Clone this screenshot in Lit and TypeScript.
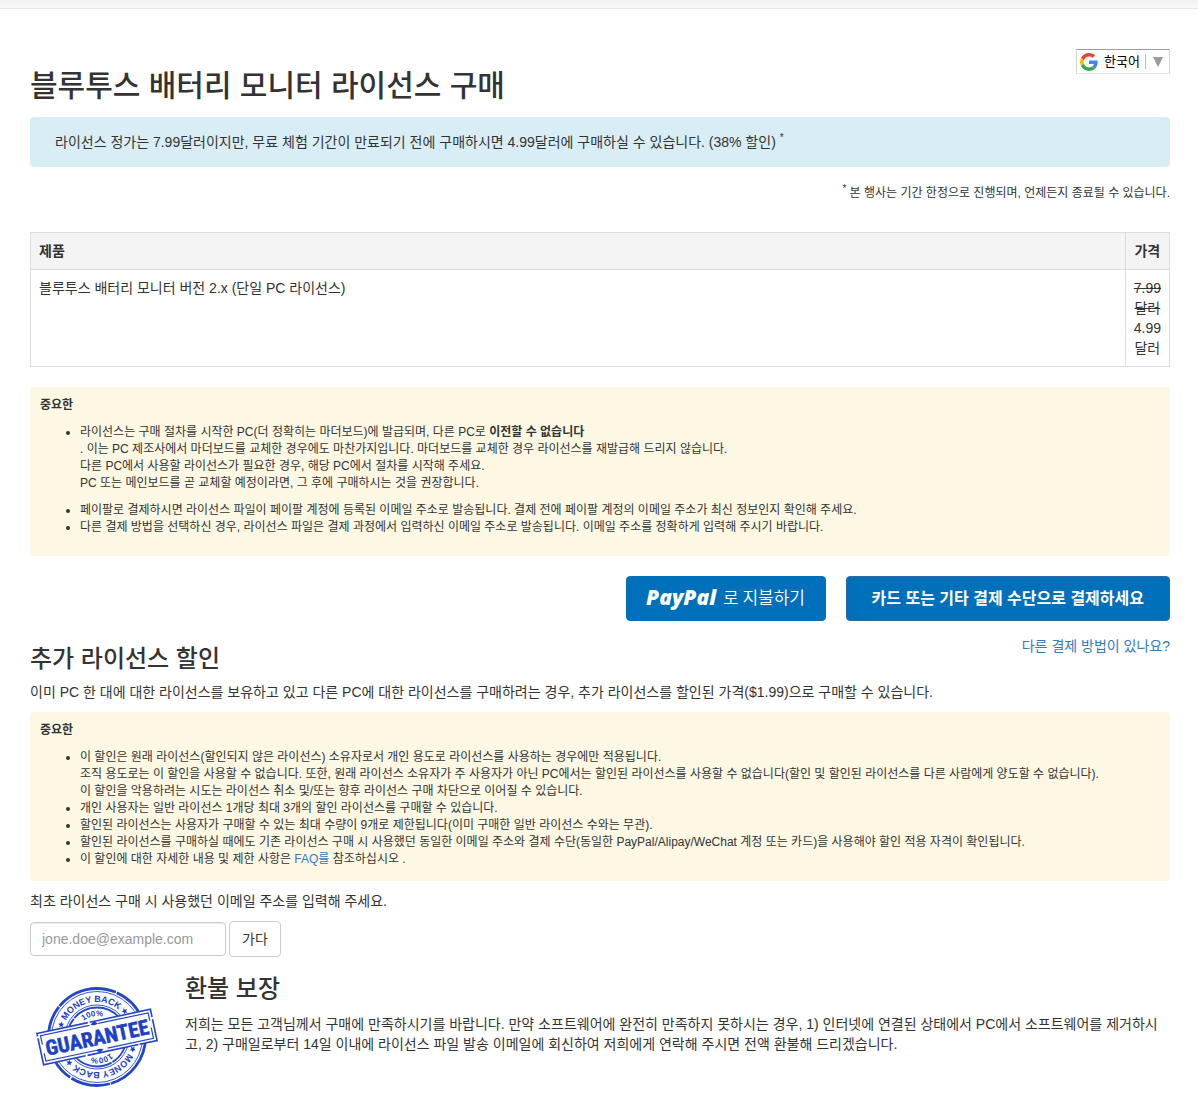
import { LitElement, html, css, svg } from "lit";
import { customElement, property, state } from "lit/decorators.js";

const shared = css`
  *,
  *::before,
  *::after {
    box-sizing: border-box;
  }
  a {
    color: #337ab7;
    text-decoration: none;
  }
  a:hover {
    text-decoration: underline;
  }
`;

/** Language picker shown at the top right of the page. */
@customElement("language-picker")
class LanguagePicker extends LitElement {
  @property() language = "한국어";

  static styles = [
    shared,
    css`
      :host {
        display: block;
        flex: none;
      }
      .picker {
        display: flex;
        align-items: center;
        height: 25px;
        padding: 0 6px 0 3px;
        background: #fff;
        border: 1px solid #d5d5d5;
        border-top-color: #9b9b9b;
        border-bottom-color: #e8e8e8;
        border-radius: 0;
        font: 13px/20px "Liberation Sans", "Noto Sans CJK KR", sans-serif;
        color: #000;
        cursor: pointer;
      }
      .logo {
        width: 18px;
        height: 18px;
        margin-right: 6px;
      }
      .arrow {
        width: 18px;
        height: 15px;
        margin-left: 5px;
        padding-left: 7px;
        border-left: 1px solid #bbb;
      }
      .arrow svg {
        display: block;
        width: 10px;
        height: 15px;
      }
    `,
  ];

  render() {
    return html`
      <button class="picker" type="button">
        <svg class="logo" viewBox="0 0 48 48" aria-hidden="true">
          <path fill="#EA4335" d="M24 9.5c3.54 0 6.71 1.22 9.21 3.6l6.85-6.85C35.9 2.38 30.47 0 24 0 14.62 0 6.51 5.38 2.56 13.22l7.98 6.19C12.43 13.72 17.74 9.5 24 9.5z" />
          <path fill="#4285F4" d="M46.98 24.55c0-1.57-.15-3.09-.38-4.55H24v9.02h12.94c-.58 2.96-2.26 5.48-4.78 7.18l7.73 6c4.51-4.18 7.09-10.36 7.09-17.65z" />
          <path fill="#FBBC05" d="M10.53 28.59c-.48-1.45-.76-2.99-.76-4.59s.27-3.14.76-4.59l-7.98-6.19C.92 16.46 0 20.12 0 24c0 3.88.92 7.54 2.56 10.78l7.97-6.19z" />
          <path fill="#34A853" d="M24 48c6.48 0 11.93-2.13 15.89-5.81l-7.73-6c-2.15 1.45-4.92 2.3-8.16 2.3-6.26 0-11.57-4.22-13.47-9.91l-7.98 6.19C6.51 42.62 14.62 48 24 48z" />
        </svg>
        <span>${this.language}</span>
        <span class="arrow">
          <svg viewBox="0 0 10 15" aria-hidden="true"><path fill="#9b9b9b" d="M0 3h10L5 13z" /></svg>
        </span>
      </button>
    `;
  }
}

/** Round money-back stamp with a tilted banner. */
@customElement("guarantee-stamp")
class GuaranteeStamp extends LitElement {
  static styles = css`
    :host {
      display: block;
      flex: none;
    }
    .stamp {
      display: block;
      width: 135px;
      height: 120px;
      fill: none;
      stroke: #2345c8;
    }
    .word {
      fill: #1d40c6;
      stroke: none;
      font-family: "Liberation Sans", sans-serif;
      font-weight: 700;
      text-anchor: middle;
    }
    .ring {
      font-size: 9px;
    }
    .percent {
      font-size: 8px;
    }
    .title {
      font-family: "Roboto Condensed", "Open Sans Condensed", "Roboto", sans-serif;
      font-size: 21px;
      stroke: #1d40c6;
      stroke-width: 0.5;
    }
    .paper {
      fill: #fefefe;
    }
    .solid {
      fill: #1d40c6;
      stroke: none;
    }
  `;

  private half() {
    const star = "M0 -3l.9 2 2.100.2-1.600 1.400.5 2.100-1.900-1.100-1.900 1.100.5-2.100-1.600-1.400 2.100-.2z";
    return svg`
      <text class="word ring"><textPath href="#outer" startOffset="50%">MONEY BACK</textPath></text>
      <text class="word percent"><textPath href="#inner" startOffset="50%">100%</textPath></text>
      <path class="solid" d=${star} transform="rotate(-59) translate(0 -38)" />
      <path class="solid" d=${star} transform="rotate(59) translate(0 -38)" />
    `;
  }

  render() {
    return html`
      <svg class="stamp" viewBox="0 0 135 120" role="img" aria-label="Money back guarantee">
        <defs>
          <path id="outer" d="M-35 0A35 35 0 0 1 35 0" />
          <path id="inner" d="M-21 0A21 21 0 0 1 21 0" />
        </defs>
        <g transform="translate(67 61)">
          <circle r="48.500" stroke-width="2.800" stroke-dasharray="62 1 40 1.500 80 1" />
          <circle r="45.500" stroke-width="0.900" />
          <circle r="32" stroke-width="0.900" />
          <circle r="29.500" stroke-width="1.800" stroke-dasharray="30 1 50 1" />
          <g transform="rotate(-12)">${this.half()}</g>
          <g transform="rotate(168)">${this.half()}</g>
          <g transform="rotate(-12)">
            <rect class="paper" x="-58" y="-16" width="116" height="32" stroke-width="1.600" stroke-dasharray="52 2 70 2 40 1" />
            <path d="M-55 -4V-13H-5M4 -13H55V-5M55 2V13H8M1 13H-55V5" stroke-width="1.200" />
            <path class="solid" d="M-4 -13l4-3 4 3-4 1zM-4 13l4 3 4-3-4-1z" />
            <text class="word title" y="8">GUARANTEE</text>
          </g>
        </g>
      </svg>
    `;
  }
}

/** Yellow box that lists the terms of a purchase. */
@customElement("important-note")
class ImportantNote extends LitElement {
  @property() heading = "중요한";

  static styles = [
    shared,
    css`
      :host {
        display: block;
        padding: 10px;
        background: #fcf8e3;
        border-radius: 4px;
        font-size: 12px;
        line-height: 17px;
      }
      .heading {
        display: block;
        margin-bottom: 10px;
      }
    `,
  ];

  render() {
    return html`<strong class="heading">${this.heading}</strong><slot></slot>`;
  }
}

@customElement("app-root")
class AppRoot extends LitElement {
  @state() private email = "";

  static styles = [
    shared,
    css`
      :host {
        display: block;
        font-family: "Liberation Sans", "Noto Sans CJK KR", sans-serif;
        font-size: 14px;
        line-height: 20px;
        color: #333;
        background: #fff;
      }
      h1,
      h2,
      p,
      ul {
        margin: 0;
      }
      h1,
      h2 {
        font-weight: 500;
      }
      h1 {
        padding-top: 20px;
        font-size: 30px;
        line-height: 33px;
      }
      h2 {
        font-size: 24px;
        line-height: 26px;
      }
      .topbar {
        height: 9px;
        background: linear-gradient(#f1f1f1, #f8f8f8);
        border-bottom: 1px solid #e7e7e7;
      }
      .page {
        padding: 40px 28px 10px 30px;
      }
      .header {
        display: flex;
        justify-content: space-between;
        align-items: flex-start;
        margin-bottom: 15px;
      }
      .offer {
        padding: 15px 25px;
        background: #d9edf7;
        border-radius: 4px;
      }
      sup {
        font-size: 10px;
        line-height: 0;
      }
      .terms {
        margin: 16px 0 29px;
        font-size: 12px;
        text-align: right;
      }
      .products {
        width: 100%;
        margin-bottom: 20px;
        border-collapse: collapse;
      }
      .products th,
      .products td {
        padding: 8px;
        border: 1px solid #ddd;
        text-align: left;
        vertical-align: top;
      }
      .products th {
        background: #f4f4f4;
      }
      .products .price {
        width: 1%;
        text-align: center;
        word-break: keep-all;
      }
      .list {
        padding-left: 40px;
      }
      .list.purchase {
        padding-bottom: 10px;
      }
      .list.discount {
        padding-bottom: 3px;
      }
      .list .spaced {
        margin-bottom: 10px;
      }
      .pay {
        display: flex;
        flex-wrap: wrap;
        justify-content: flex-end;
        gap: 20px;
        margin-top: 20px;
      }
      .pay-button {
        display: flex;
        align-items: center;
        justify-content: center;
        height: 45px;
        padding: 0 25px 3px;
        border: 1px solid #0070ba;
        border-radius: 4px;
        background: #0070ba;
        color: #fff;
        font-family: inherit;
        font-size: 16px;
        cursor: pointer;
      }
      .paypal {
        min-width: 200px;
        gap: 7px;
        padding: 0 16px 3px;
        font-family: "Noto Sans CJK KR", sans-serif;
        font-size: 17px;
        font-weight: 350;
        line-height: 24px;
      }
      .paypal-logo {
        font-family: "Open Sans", sans-serif;
        font-size: 21px;
        font-style: italic;
        font-weight: 800;
      }
      .card {
        border-color: #2e6da4;
        font-weight: 700;
      }
      .split {
        display: flex;
        justify-content: space-between;
        align-items: flex-start;
        padding-top: 15px;
      }
      .split h2 {
        padding-top: 10px;
      }
      .intro {
        padding: 10px 0;
      }
      .lookup {
        margin: 10px 0 19px;
      }
      .lookup-row {
        display: flex;
        align-items: center;
        gap: 3px;
        margin-top: 10px;
      }
      .email {
        width: 196px;
        height: 34px;
        padding: 0 11px;
        border: 1px solid #ccc;
        border-radius: 4px;
        box-shadow: inset 0 1px 1px rgba(0, 0, 0, 0.075);
        color: #555;
        font: inherit;
      }
      .email::placeholder {
        color: #999;
        opacity: 1;
      }
      .go {
        height: 36px;
        padding: 0 12px;
        border: 1px solid #ccc;
        border-radius: 4px;
        background: #fff;
        color: #333;
        font: inherit;
        cursor: pointer;
      }
      .guarantee {
        display: flex;
        align-items: flex-start;
        gap: 20px;
      }
      .guarantee h2 {
        margin-bottom: 12px;
      }
    `,
  ];

  private onEmail(event: Event) {
    this.email = (event.target as HTMLInputElement).value;
  }

  render() {
    return html`
      <div class="topbar"></div>
      <main class="page">
        <header class="header">
          <h1>블루투스 배터리 모니터 라이선스 구매</h1>
          <language-picker></language-picker>
        </header>

        <p class="offer">
          라이선스 정가는 7.99달러이지만, 무료 체험 기간이 만료되기 전에 구매하시면 4.99달러에 구매하실 수 있습니다. (38% 할인) <sup>*</sup>
        </p>
        <p class="terms"><sup>*</sup> 본 행사는 기간 한정으로 진행되며, 언제든지 종료될 수 있습니다.</p>

        <table class="products">
          <thead>
            <tr>
              <th scope="col">제품</th>
              <th class="price" scope="col">가격</th>
            </tr>
          </thead>
          <tbody>
            <tr>
              <td>블루투스 배터리 모니터 버전 2.x (단일 PC 라이선스)</td>
              <td class="price"><del>7.99 달러</del> 4.99 달러</td>
            </tr>
          </tbody>
        </table>

        <important-note>
          <ul class="list purchase">
            <li class="spaced">
              라이선스는 구매 절차를 시작한 PC(더 정확히는 마더보드)에 발급되며, 다른 PC로 <strong>이전할 수 없습니다</strong><br />
              . 이는 PC 제조사에서 마더보드를 교체한 경우에도 마찬가지입니다. 마더보드를 교체한 경우 라이선스를 재발급해 드리지 않습니다.<br />
              다른 PC에서 사용할 라이선스가 필요한 경우, 해당 PC에서 절차를 시작해 주세요.<br />
              PC 또는 메인보드를 곧 교체할 예정이라면, 그 후에 구매하시는 것을 권장합니다.
            </li>
            <li>페이팔로 결제하시면 라이선스 파일이 페이팔 계정에 등록된 이메일 주소로 발송됩니다. 결제 전에 페이팔 계정의 이메일 주소가 최신 정보인지 확인해 주세요.</li>
            <li>다른 결제 방법을 선택하신 경우, 라이선스 파일은 결제 과정에서 입력하신 이메일 주소로 발송됩니다. 이메일 주소를 정확하게 입력해 주시기 바랍니다.</li>
          </ul>
        </important-note>

        <div class="pay">
          <button class="pay-button paypal" type="button"><span class="paypal-logo">PayPal</span><span>로 지불하기</span></button>
          <button class="pay-button card" type="button">카드 또는 기타 결제 수단으로 결제하세요</button>
        </div>

        <section>
          <div class="split">
            <h2>추가 라이선스 할인</h2>
            <a href="#payment-methods">다른 결제 방법이 있나요?</a>
          </div>
          <p class="intro">이미 PC 한 대에 대한 라이선스를 보유하고 있고 다른 PC에 대한 라이선스를 구매하려는 경우, 추가 라이선스를 할인된 가격($1.99)으로 구매할 수 있습니다.</p>
          <important-note>
            <ul class="list discount">
              <li>
                이 할인은 원래 라이선스(할인되지 않은 라이선스) 소유자로서 개인 용도로 라이선스를 사용하는 경우에만 적용됩니다.<br />
                조직 용도로는 이 할인을 사용할 수 없습니다. 또한, 원래 라이선스 소유자가 주 사용자가 아닌 PC에서는 할인된 라이선스를 사용할 수 없습니다(할인 및 할인된 라이선스를 다른 사람에게 양도할 수 없습니다).<br />
                이 할인을 악용하려는 시도는 라이선스 취소 및/또는 향후 라이선스 구매 차단으로 이어질 수 있습니다.
              </li>
              <li>개인 사용자는 일반 라이선스 1개당 최대 3개의 할인 라이선스를 구매할 수 있습니다.</li>
              <li>할인된 라이선스는 사용자가 구매할 수 있는 최대 수량이 9개로 제한됩니다(이미 구매한 일반 라이선스 수와는 무관).</li>
              <li>할인된 라이선스를 구매하실 때에도 기존 라이선스 구매 시 사용했던 동일한 이메일 주소와 결제 수단(동일한 PayPal/Alipay/WeChat 계정 또는 카드)을 사용해야 할인 적용 자격이 확인됩니다.</li>
              <li>이 할인에 대한 자세한 내용 및 제한 사항은 <a href="#faq">FAQ를</a> 참조하십시오 .</li>
            </ul>
          </important-note>

          <form class="lookup" @submit=${(e: Event) => e.preventDefault()}>
            <label for="email">최초 라이선스 구매 시 사용했던 이메일 주소를 입력해 주세요.</label>
            <div class="lookup-row">
              <input class="email" id="email" type="email" placeholder="jone.doe@example.com" .value=${this.email} @input=${this.onEmail} />
              <button class="go" type="submit">가다</button>
            </div>
          </form>
        </section>

        <section class="guarantee">
          <guarantee-stamp></guarantee-stamp>
          <div>
            <h2>환불 보장</h2>
            <p>저희는 모든 고객님께서 구매에 만족하시기를 바랍니다. 만약 소프트웨어에 완전히 만족하지 못하시는 경우, 1) 인터넷에 연결된 상태에서 PC에서 소프트웨어를 제거하시고, 2) 구매일로부터 14일 이내에 라이선스 파일 발송 이메일에 회신하여 저희에게 연락해 주시면 전액 환불해 드리겠습니다.</p>
          </div>
        </section>
      </main>
    `;
  }
}
